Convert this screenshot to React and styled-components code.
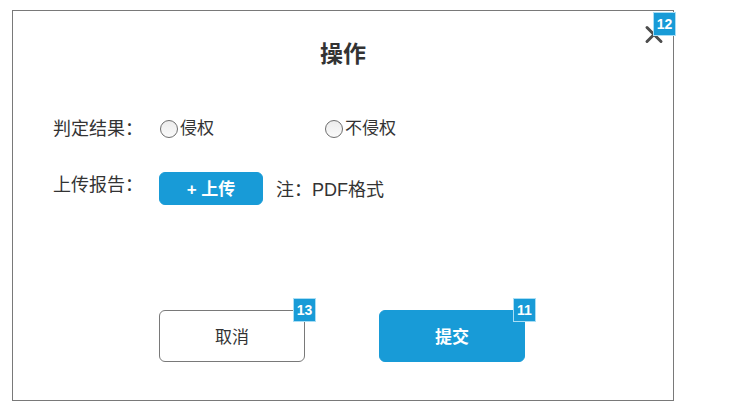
import React from "react";
import styled, { createGlobalStyle } from "styled-components";

const GlobalStyle = createGlobalStyle`
  * { box-sizing: border-box; }
  body {
    margin: 0;
    background: #fff;
    color: #333;
    font-family: "Liberation Sans", "Noto Sans CJK SC", sans-serif;
  }
  button, input { font: inherit; margin: 0; }
`;

const Dialog = styled.form`
  position: relative;
  margin: 10px 78px 10px 12px;
  padding: 27px 40px 38px;
  border: 1px solid #797979;
  background: #fff;
`;

const Title = styled.h1`
  margin: 0 0 46px;
  font-size: 23px;
  line-height: 32px;
  font-weight: 700;
  text-align: center;
`;

const Row = styled.div`
  display: grid;
  grid-template-columns: 106px 1fr;
  align-items: ${(p) => p.$align || "center"};
  min-height: 24px;
  margin-bottom: ${(p) => p.$gap}px;
`;

const Label = styled.span`
  font-size: 18px;
  line-height: 26px;
`;

const Note = styled(Label)`
  padding-top: 2px;
`;

const Options = styled.div`
  display: grid;
  grid-template-columns: 165px 1fr;
`;

const Option = styled.label`
  display: flex;
  align-items: center;
  gap: 2px;
  padding-left: 1px;
  font-size: 17px;
  line-height: 24px;
`;

const Radio = styled.input`
  appearance: none;
  flex: none;
  width: 18px;
  height: 18px;
  border: 1px solid #6e6e6e;
  border-radius: 50%;
  background: linear-gradient(#ececec, #fafafa);
  &:checked {
    background: radial-gradient(circle, #333 0 4px, #f3f3f3 5px);
  }
`;

const Upload = styled.div`
  display: flex;
  align-items: center;
  gap: 13px;
`;

const Button = styled.button`
  position: relative;
  width: ${(p) => (p.$small ? 104 : 146)}px;
  height: ${(p) => (p.$small ? 33 : 52)}px;
  padding: 3px 0 0;
  border: 1px solid ${(p) => (p.$primary ? "#189bd7" : "#797979")};
  border-radius: 6px;
  background: ${(p) => (p.$primary ? "#189bd7" : "#fff")};
  color: ${(p) => (p.$primary ? "#fff" : "#333")};
  font-size: 17px;
  font-weight: ${(p) => (p.$primary ? 700 : 400)};
  line-height: 26px;
`;

const Actions = styled.div`
  display: flex;
  gap: 74px;
  padding-left: 106px;
`;

const Badge = styled.span`
  position: absolute;
  top: -13px;
  right: -12px;
  width: 23px;
  height: 24px;
  border: 1px solid #a9def5;
  background: #189bd7;
  color: #fff;
  font: 700 14px/22px "Liberation Sans", sans-serif;
  text-align: center;
`;

const Close = styled.button`
  position: absolute;
  top: 14px;
  right: 9px;
  width: 20px;
  height: 20px;
  padding: 0;
  border: 0;
  background: none;
  svg { display: block; }
`;

export default function App() {
  return (
    <>
      <GlobalStyle />
      <Dialog lang="zh-CN" role="dialog" aria-labelledby="title" onSubmit={(e) => e.preventDefault()}>
        <Close type="button" aria-label="关闭">
          <svg width="20" height="20" viewBox="0 0 20 20" fill="none" stroke="#4d4d4d" strokeWidth="3" strokeLinecap="round">
            <path d="M3 2.5 L17 16.5 M17 2.5 L3 16.5" />
          </svg>
          <Badge>12</Badge>
        </Close>
        <Title id="title">操作</Title>
        <Row role="radiogroup" aria-labelledby="result" $gap={30}>
          <Label id="result">判定结果：</Label>
          <Options>
            <Option><Radio type="radio" name="result" value="yes" />侵权</Option>
            <Option><Radio type="radio" name="result" value="no" />不侵权</Option>
          </Options>
        </Row>
        <Row $align="start" $gap={105}>
          <Label id="report">上传报告：</Label>
          <Upload>
            <Button type="button" aria-describedby="report" $primary $small>+ 上传</Button>
            <Note>注：PDF格式</Note>
          </Upload>
        </Row>
        <Actions>
          <Button type="button">取消<Badge>13</Badge></Button>
          <Button type="submit" $primary>提交<Badge>11</Badge></Button>
        </Actions>
      </Dialog>
    </>
  );
}
